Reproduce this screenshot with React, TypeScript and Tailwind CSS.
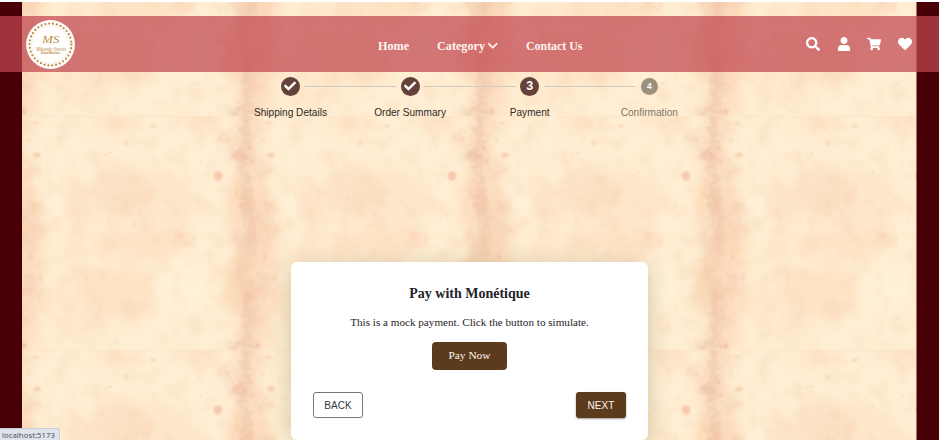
import type { ReactNode } from 'react';
import { FaCheck, FaChevronDown, FaHeart, FaSearch, FaShoppingCart, FaUser } from 'react-icons/fa';

const TILE = 234;

// [cx, cy, rx, ry, colour, opacity]
type Blot = [number, number, number, number, string, number];

const washes: Blot[] = [
  [103, 76, 32, 28, '#f9d3b4', 0.42],
  [135, 85, 40, 32, '#fbdcbc', 0.34],
  [118, 128, 50, 14, '#fbd0ad', 0.34],
  [95, 178, 42, 30, '#fcd8b4', 0.4],
  [50, 105, 7, 52, '#fbd6b8', 0.42],
  [64, 88, 12, 22, '#fbd8b8', 0.3],
  [178, 7, 22, 6, '#fbcfae', 0.45],
  [90, 8, 20, 9, '#fbd3b0', 0.35],
  [60, 190, 30, 40, '#fde3c6', 0.4],
  [168, 170, 30, 22, '#fff3da', 0.5],
  [150, 45, 22, 12, '#fff0d4', 0.6],
  [28, 85, 16, 16, '#fff3da', 0.8],
  [147, 160, 20, 12, '#fff1d6', 0.5],
  [226, 115, 19, 128, '#f8caa8', 0.38],
  [242, 150, 18, 88, '#fbcfac', 0.34],
  [216, 80, 12, 20, '#fac89c', 0.22],
  [215, 165, 14, 30, '#f6c898', 0.28],
];

const stains: Blot[] = [
  [223, 20, 4, 24, '#d99a84', 0.32],
  [219, 42, 10, 8, '#e0a088', 0.32],
  [204, 22, 6, 8, '#e6a888', 0.25],
  [223, 76, 4, 24, '#dca08a', 0.3],
  [229, 112, 5, 32, '#dca08a', 0.28],
  [218, 140, 6, 28, '#e0aa8c', 0.16],
  [226, 195, 7, 30, '#dca08a', 0.26],
  [243, 170, 7, 14, '#e6a888', 0.18],
  [247, 105, 8, 20, '#e6a888', 0.14],
  [241, 52, 6, 9, '#e6a888', 0.2],
  [219, 229, 19, 3, '#cf8c74', 0.36],
  [160, 120, 12, 6, '#f4ba9a', 0.22],
];

const spots: Blot[] = [
  [196, 60, 4.4, 4.8, '#f3b292', 0.6],
  [249, 39, 3.8, 2.6, '#f3b292', 0.5],
  [104, 27, 2.6, 2.8, '#f6bc9a', 0.4],
  [131, 10, 3.4, 1.6, '#f3b08c', 0.4],
  [121, 12, 4, 1.2, '#f3b08c', 0.2],
  [247, 7, 3.2, 1.6, '#f3b292', 0.4],
  [243, 141, 2, 2, '#eea68a', 0.4],
  [241, 24, 1.8, 1.8, '#eea68a', 0.25],
  [236, 230, 2.6, 2, '#e8a084', 0.35],
  [64, 161, 1.6, 4.5, '#f4ba9c', 0.25],
  [253, 162, 1.4, 3.6, '#eea68a', 0.25],
];

const specks: [number, number][] = [
  [87, 37], [89, 36], [179, 32], [179, 46], [108, 183], [149, 56], [173, 201],
  [94, 226], [105, 87], [118, 98], [92, 82], [114, 84], [184, 103], [58, 203], [83, 38],
];

const blot = ([cx, cy, rx, ry, fill, opacity]: Blot, key: string, dx: number, dy: number) => (
  <ellipse key={key} cx={cx + dx} cy={cy + dy} rx={rx} ry={ry} fill={fill} opacity={opacity} />
);

// Each blot also wraps round to the far edge so the paper repeats without gaps.
const wrapped = (list: Blot[]) => list.flatMap((b, i) => [blot(b, `${i}a`, 0, 0), blot(b, `${i}b`, -TILE, 0)]);

function Parchment() {
  return (
    <svg className="block h-full w-full" aria-hidden="true">
      <defs>
        <filter id="stain" filterUnits="userSpaceOnUse" x="-40" y="-40" width="320" height="320" colorInterpolationFilters="sRGB">
          <feGaussianBlur stdDeviation="3" result="b" />
          <feTurbulence type="fractalNoise" baseFrequency="0.12" numOctaves="4" seed="4" />
          <feDisplacementMap in="b" scale="16" xChannelSelector="R" yChannelSelector="G" />
        </filter>
        <filter id="wash" filterUnits="userSpaceOnUse" x="-60" y="-60" width="360" height="360" colorInterpolationFilters="sRGB">
          <feGaussianBlur stdDeviation="6" result="b" />
          <feTurbulence type="fractalNoise" baseFrequency="0.04" numOctaves="3" seed="9" />
          <feDisplacementMap in="b" scale="24" xChannelSelector="R" yChannelSelector="G" />
          <feGaussianBlur stdDeviation="0.8" />
        </filter>
        <filter id="grain" filterUnits="userSpaceOnUse" x="0" y="0" width="234" height="234" colorInterpolationFilters="sRGB">
          <feTurbulence type="fractalNoise" baseFrequency="0.06" numOctaves="5" seed="12" stitchTiles="stitch" />
          <feColorMatrix values="0 0 0 0 0.9  0 0 0 0 0.62  0 0 0 0 0.46  1.6 0 0 0 -0.72" />
        </filter>
        <filter id="spot">
          <feGaussianBlur stdDeviation="0.8" />
        </filter>
        <pattern id="paper" width={TILE} height={TILE} patternUnits="userSpaceOnUse" x="0" y="114">
          <rect width={TILE} height={TILE} fill="#ffeed3" />
          <g filter="url(#wash)">{wrapped(washes)}</g>
          <g filter="url(#stain)">{wrapped(stains)}</g>
          <rect width={TILE} height={TILE} filter="url(#grain)" opacity="0.16" />
          <g filter="url(#spot)">{wrapped(spots)}</g>
          {specks.map(([x, y]) => (
            <circle key={`${x}-${y}`} cx={x} cy={y} r="0.6" fill="#b98f70" opacity="0.45" />
          ))}
          <rect width={TILE} height="1" fill="#f7cba8" opacity="0.25" />
        </pattern>
      </defs>
      <rect width="100%" height="100%" fill="url(#paper)" />
    </svg>
  );
}

function Logo() {
  return (
    <svg viewBox="0 0 49 49" className="h-[49px] w-[49px]" role="img" aria-label="Logo">
      <circle cx="24.5" cy="24.5" r="24.4" fill="#fffefc" />
      <circle cx="24.5" cy="24.5" r="21" fill="none" stroke="#bd8f45" strokeWidth="2.3" strokeLinecap="round" strokeDasharray="0 3.88" />
      <circle cx="24.5" cy="24.5" r="18.8" fill="none" stroke="#eee5d4" strokeWidth="0.5" />
      <g fill="#b99045" textAnchor="middle" className="font-['Liberation_Serif',serif] italic">
        <text x="24.8" y="23.4" fontSize="11" textLength="17" lengthAdjust="spacingAndGlyphs">MS</text>
        <text x="25" y="31" fontSize="5.4" textLength="30" lengthAdjust="spacingAndGlyphs">Mikando Sweets</text>
      </g>
      <text x="24.5" y="34.4" fontSize="2.6" textAnchor="middle" fill="#b98a3c" textLength="19" className="font-['Liberation_Sans',sans-serif] font-bold">Dessert Business</text>
    </svg>
  );
}

function Header() {
  return (
    <header className="flex h-14 items-center bg-[rgba(193,71,81,0.72)] pl-[26px] pr-[27px] text-white">
      <div className="flex w-[352px] items-center">
        <Logo />
      </div>
      <nav className="flex flex-1 items-center pt-[3px] font-['Liberation_Serif',serif] text-[12.2px] font-bold leading-4 text-[#fff4f0]">
        <a className="w-[59px]">Home</a>
        <a className="flex w-[89px] items-center gap-[2px]">
          Category
          <FaChevronDown className="size-[11.5px]" />
        </a>
        <a className="text-[11.9px]">Contact Us</a>
      </nav>
      <div className="flex items-center gap-[16.7px]">
        <FaSearch className="size-[14px]" />
        <FaUser className="size-[14px]" />
        <FaShoppingCart className="size-[14px]" />
        <FaHeart className="size-[14px]" />
      </div>
    </header>
  );
}

const steps: { label: string; state: 'done' | 'active' | 'todo'; mark: ReactNode }[] = [
  { label: 'Shipping Details', state: 'done', mark: <FaCheck className="size-[12px]" /> },
  { label: 'Order Summary', state: 'done', mark: <FaCheck className="size-[12px]" /> },
  { label: 'Payment', state: 'active', mark: '3' },
  { label: 'Confirmation', state: 'todo', mark: '4' },
];

const badge = {
  done: 'size-[19px] bg-[#644139]',
  active: 'mt-px size-[19px] bg-[#644139] text-[12.5px]',
  todo: 'size-[17px] bg-[#9b8f7e] text-[8.5px]',
};

function Stepper() {
  return (
    <ol className="ml-[230.7px] flex w-[478.4px] font-['Liberation_Sans',sans-serif]">
      {steps.map((step, i) => (
        <li key={step.label} className="flex flex-1 flex-col items-center">
          <div className="flex h-7 w-full items-center">
            <span className={i > 0 ? 'h-px flex-1 bg-[#cfcbc2]' : 'flex-1'} />
            <span className="flex w-7 justify-center">
              <span className={`flex shrink-0 items-center justify-center rounded-full font-bold leading-none text-white ${badge[step.state]}`}>
                {step.mark}
              </span>
            </span>
            <span className={i < steps.length - 1 ? 'h-px flex-1 bg-[#cfcbc2]' : 'flex-1'} />
          </div>
          <span className={`mt-1.5 text-[10.1px] leading-[14px] ${step.state === 'todo' ? 'text-[#7f766a]' : 'text-[#2f2a26]'}`}>
            {step.label}
          </span>
        </li>
      ))}
    </ol>
  );
}

function PaymentCard() {
  return (
    <section className="ml-[291px] mt-[141.5px] flex h-[178.5px] w-[357px] flex-col items-center rounded-md bg-white px-[22px] pt-[23.5px] font-['Liberation_Serif',serif] text-[#1f2328] shadow-[0_3px_22px_rgba(110,110,60,0.3)]">
      <h2 className="text-[14px] font-bold leading-[18px]">Pay with Monétique</h2>
      <p className="mt-[11px] text-[11.15px] leading-4">This is a mock payment. Click the button to simulate.</p>
      <button className="mt-3 h-7 w-[75px] rounded bg-[#5c3a1c] text-[11.4px] text-[#fff8f0]">Pay Now</button>
      <div className="mt-[22px] flex w-full justify-between font-['Liberation_Sans',sans-serif] text-[10px] tracking-[0.1px]">
        <button className="h-[26px] w-[50px] rounded-[3px] border border-[#77777a] text-[#33373b]">BACK</button>
        <button className="h-[26px] w-[50px] rounded-[3px] bg-[#5c3a1c] text-[#fff8f0] shadow-[0_1px_2px_rgba(0,0,0,0.4)]">NEXT</button>
      </div>
    </section>
  );
}

export default function App() {
  return (
    <div className="relative h-[440px] w-[939px] overflow-hidden bg-white pt-0.5">
      <div className="h-[438px] bg-[#470005] pl-[22px] pr-[22.5px]">
        <Parchment />
      </div>
      <div className="absolute inset-0 pt-4">
        <Header />
        <Stepper />
        <PaymentCard />
      </div>
      <div className="absolute bottom-0 left-0 flex h-3 w-[60px] items-center rounded-tr-[3px] border-r border-t border-[#c9ced6] bg-[#dfe4ec] pl-0.5 pt-[3px] font-['Noto_Sans',sans-serif] text-[7.8px] leading-none text-[#50555c]">
        localhost:5173
      </div>
    </div>
  );
}
